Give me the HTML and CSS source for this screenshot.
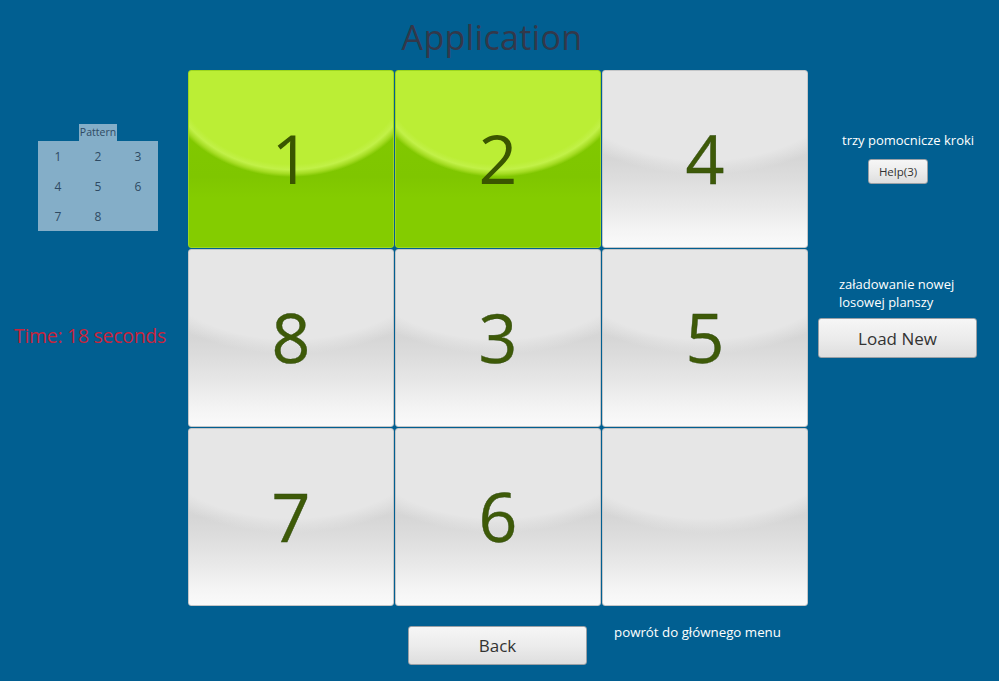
FILE: index.html
```html
<!DOCTYPE html>
<html lang="pl">
<head>
<meta charset="utf-8">
<title>Application</title>
<link rel="stylesheet" href="styles.css">
</head>
<body>
<div class="app">
  <div class="title-row"><h1 class="title">Application</h1></div>

  <aside class="left">
    <div class="pattern">
      <div class="pattern-label">Pattern</div>
      <div class="pattern-grid">
        <span>1</span><span>2</span><span>3</span>
        <span>4</span><span>5</span><span>6</span>
        <span>7</span><span>8</span><span></span>
      </div>
    </div>
    <div class="timer">Time: 18 seconds</div>
  </aside>

  <main class="board">
    <div class="tile green"><span>1</span></div>
    <div class="tile green"><span>2</span></div>
    <div class="tile"><span>4</span></div>
    <div class="tile"><span>8</span></div>
    <div class="tile"><span>3</span></div>
    <div class="tile"><span>5</span></div>
    <div class="tile"><span>7</span></div>
    <div class="tile"><span>6</span></div>
    <div class="tile empty"><span></span></div>
  </main>

  <aside class="right">
    <div class="help-note">trzy pomocnicze kroki</div>
    <button class="btn btn-help">Help(3)</button>
    <div class="load-note">załadowanie nowej<br>losowej planszy</div>
    <button class="btn btn-load">Load New</button>
  </aside>

  <footer class="bottom">
    <button class="btn btn-back">Back</button>
    <div class="back-note">powrót do głównego menu</div>
  </footer>
</div>
</body>
</html>
```

FILE: styles.css
```css
html, body {
  margin: 0;
  padding: 0;
  background: #015f91;
  font-family: "Open Sans", "Noto Sans", sans-serif;
}

.app {
  width: 999px;
  height: 681px;
  display: grid;
  grid-template-columns: 188px 620px 1fr;
  grid-template-rows: 70px 536px 1fr;
  overflow: hidden;
}

.title-row {
  grid-column: 2;
  grid-row: 1;
  display: flex;
  justify-content: center;
  padding-right: 12px;
}

.title {
  margin: 0;
  padding-top: 14px;
  font-size: 34px;
  font-weight: 400;
  line-height: 46px;
  color: #33384a;
  letter-spacing: 0.3px;
}

/* left column */
.left {
  grid-column: 1;
  grid-row: 2;
  display: flex;
  flex-direction: column;
}

.pattern {
  margin-top: 54px;
  margin-left: 38px;
  width: 120px;
  display: flex;
  flex-direction: column;
  align-items: center;
}

.pattern-label {
  background: #84aec8;
  color: #2e4a63;
  font-size: 10.5px;
  line-height: 17px;
  height: 17px;
  padding: 0 1px;
}

.pattern-grid {
  width: 120px;
  height: 90px;
  background: #84aec8;
  display: grid;
  grid-template-columns: repeat(3, 40px);
  grid-template-rows: repeat(3, 30px);
}

.pattern-grid span {
  display: flex;
  align-items: center;
  justify-content: center;
  font-size: 12px;
  color: #2e4a63;
}

.timer {
  margin-top: 93px;
  margin-left: 14px;
  font-size: 19.5px;
  color: #c8243c;
  line-height: 24px;
  white-space: nowrap;
  letter-spacing: -0.3px;
}

/* board */
.board {
  grid-column: 2;
  grid-row: 2;
  display: grid;
  grid-template-columns: 206px 206px 206px;
  grid-template-rows: 178px 178px 178px;
  gap: 1px;
  align-content: start;
}

.tile {
  box-sizing: border-box;
  border: 1px solid #c4c6c8;
  border-radius: 3px;
  display: flex;
  align-items: center;
  justify-content: center;
  background:
    radial-gradient(ellipse 170px 104px at 50% 0%, #e6e6e6 0%, #e6e6e6 86%, rgba(230,230,230,0) 100%),
    linear-gradient(to bottom, #e4e4e4 0%, #d6d6d6 50%, #dcdcdc 60%, #e8e8e8 76%, #f4f4f4 90%, #fafafa 100%);
}

.tile span {
  font-size: 68px;
  line-height: 1;
  color: #3e5a08;
  margin-top: -2px;
  -webkit-text-stroke: 0.4px #2f4a10;
}

.tile.green {
  border-color: #9ed620;
  background:
    radial-gradient(ellipse 132px 106px at 50% 0%, #bbee35 0%, #bbee35 88%, #c2f148 93%, #a4dc22 97%, rgba(132,204,0,0) 100%),
    linear-gradient(to bottom, #84cc00 0%, #7fc600 60%, #84cc00 72%, #84cc00 100%);
}

.tile.green span {
  -webkit-text-stroke: 0;
  color: #3a5600;
}

/* right column */
.right {
  grid-column: 3;
  grid-row: 2;
  display: flex;
  flex-direction: column;
  align-items: flex-start;
  padding-left: 10px;
}

.help-note {
  margin-top: 62px;
  margin-left: 24px;
  font-size: 13px;
  line-height: 16px;
  color: #ffffff;
  white-space: nowrap;
}

.btn {
  font-family: "Open Sans", "Noto Sans", sans-serif;
  color: #333333;
  border: 1px solid #9aa0a6;
  border-radius: 3px;
  background: linear-gradient(to bottom, #f6f6f6 0%, #ececec 50%, #dedede 100%);
  padding: 0;
  cursor: pointer;
}

.btn-help {
  margin-top: 11px;
  margin-left: 50px;
  width: 60px;
  height: 25px;
  font-size: 11.5px;
}

.load-note {
  margin-top: 91px;
  margin-left: 21px;
  font-size: 13px;
  line-height: 18px;
  color: #ffffff;
  white-space: nowrap;
}

.btn-load {
  margin-top: 7px;
  width: 159px;
  height: 40px;
  font-size: 17px;
}

/* bottom */
.bottom {
  grid-column: 2 / 4;
  grid-row: 3;
  display: flex;
  align-items: flex-start;
  padding-left: 220px;
}

.btn-back {
  margin-top: 20px;
  width: 179px;
  height: 39px;
  font-size: 17px;
}

.back-note {
  margin-top: 18px;
  margin-left: 27px;
  font-size: 13.3px;
  line-height: 16px;
  color: #ffffff;
  white-space: nowrap;
}
```
